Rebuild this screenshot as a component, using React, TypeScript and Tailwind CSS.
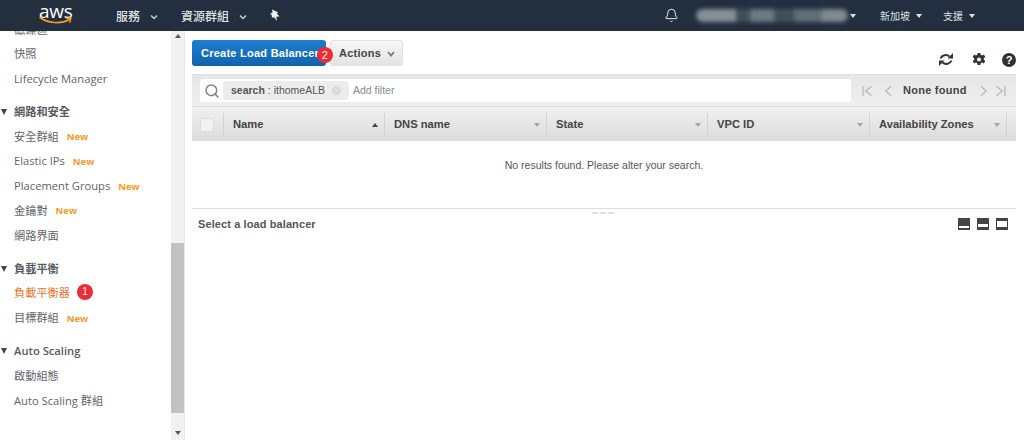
import React from "react";
import { Bell, Search, X } from "lucide-react";

const sans = "font-['Open_Sans','Noto_Sans_CJK_TC',sans-serif]";
const arial = "font-['Liberation_Sans','Noto_Sans_CJK_TC',sans-serif]";

function Caret({ className = "" }: { className?: string }) {
  return <span className={`inline-block w-0 h-0 border-l-[3.5px] border-r-[3.5px] border-t-[4px] border-l-transparent border-r-transparent ${className}`} />;
}

function CaretUp({ className = "" }: { className?: string }) {
  return <span className={`inline-block w-0 h-0 border-l-[3.5px] border-r-[3.5px] border-b-[4px] border-l-transparent border-r-transparent ${className}`} />;
}

function Item({ label, isNew, active, badge }: { label: string; isNew?: boolean; active?: boolean; badge?: string }) {
  return (
    <div className={`h-[24.8px] flex items-center pl-[14px] text-[11.2px] ${active ? "text-[#e8732a]" : "text-[#5f6368]"}`}>
      <span>{label}</span>
      {isNew && <span className="ml-[8px] text-[9.5px] font-bold text-[#f79a1e]">New</span>}
      {badge && (
        <span className={`ml-[7px] -mt-[4px] w-4 h-4 rounded-full bg-[#ef2b33] text-white text-[10px] flex items-center justify-center ${arial}`}>{badge}</span>
      )}
    </div>
  );
}

function Section({ label }: { label: string }) {
  return (
    <div className="h-[24.8px] flex items-center text-[11.2px] font-semibold text-[#555b61] mt-[8px]">
      <span className="w-0 h-0 ml-[1px] mr-[7px] border-l-[3.5px] border-r-[3.5px] border-t-[6px] border-l-transparent border-r-transparent border-t-[#444]" />
      <span>{label}</span>
    </div>
  );
}

function Col({ label, w, sort }: { label: string; w: string; sort?: boolean }) {
  return (
    <div className={`${w} h-[24px] shrink-0 flex items-center justify-between pl-[9px] pr-[6px] border-r border-[#d2d2d2]`}>
      <span className="text-[11.2px] font-bold text-[#444]">{label}</span>
      {sort ? <CaretUp className="border-b-[#444]" /> : <Caret className="border-t-[#a5a5a5]" />}
    </div>
  );
}

function PaneIcon({ kind }: { kind: "bottom" | "mid" | "top" }) {
  const pane = kind === "top" ? "top-[3px] h-[6px]" : kind === "mid" ? "top-[6px] h-[3px]" : "top-[8px] h-[2px]";
  return (
    <span className="relative block w-[12px] h-[12px] bg-[#444]">
      <span className={`absolute left-[1px] right-[1px] bg-white ${pane}`} />
    </span>
  );
}

export default function App() {
  return (
    <div className={`w-[1024px] h-[440px] overflow-hidden bg-white flex flex-col ${arial}`}>
      {/* Top nav */}
      <header className="h-[31px] shrink-0 bg-[#232f3e] flex items-center text-[#dfe3e6]">
        <div className={`relative ml-[39px] w-[36px] h-[31px] ${sans}`}>
          <span className="absolute left-0 top-0 text-[19px] leading-[22px] text-white tracking-[-0.3px]">aws</span>
          <svg className="absolute left-0 top-[16px]" width="34" height="10" viewBox="0 0 34 10" fill="none">
            <path d="M1 1.5C8 7 22 8.5 30 3.8" stroke="#f79a1e" strokeWidth="1.6" strokeLinecap="round" />
            <path d="M27.5 2.2L32 2L30.8 6.2" stroke="#f79a1e" strokeWidth="1.4" strokeLinecap="round" strokeLinejoin="round" />
          </svg>
        </div>
        <span className="ml-[41px] text-[12px] font-medium font-['Noto_Sans_CJK_TC',sans-serif]">服務</span>
        <svg className="ml-[10px] mt-[2px]" width="8" height="6" viewBox="0 0 8 6" fill="none"><path d="M1 1.5L4 4.5L7 1.5" stroke="#c8ccd0" strokeWidth="1.5" /></svg>
        <span className="ml-[23px] text-[12px] font-medium font-['Noto_Sans_CJK_TC',sans-serif]">資源群組</span>
        <svg className="ml-[10px] mt-[2px]" width="8" height="6" viewBox="0 0 8 6" fill="none"><path d="M1 1.5L4 4.5L7 1.5" stroke="#c8ccd0" strokeWidth="1.5" /></svg>
        <svg className="ml-[22px]" width="12" height="13" viewBox="0 0 12 13" fill="#eef0f2">
          <path d="M3 .5L9 3.200 7.800 4.600 10.500 7.500 7.300 7.800 8 12 5 8.200 3 8.800 2.500 5.500 .8 5 3.500 3.500z" />
        </svg>
        <Bell className="ml-[383px]" size={15} strokeWidth={1.5} color="#f2f3f4" />
        <div className="ml-[17px] w-[152px] h-[13px] flex overflow-hidden rounded-full blur-[2px] opacity-90">
          <span className="w-[40px] bg-[#8f9aa4]" />
          <span className="w-[14px] bg-[#46525f]" />
          <span className="w-[24px] bg-[#76828d]" />
          <span className="w-[20px] bg-[#46525f]" />
          <span className="w-[28px] bg-[#68747f]" />
          <span className="w-[26px] bg-[#8a949d]" />
        </div>
        <Caret className="ml-[2px] border-t-[#dfe3e6]" />
        <span className="ml-[24px] text-[10px] font-['Noto_Sans_CJK_TC',sans-serif]">新加坡</span>
        <Caret className="ml-[6px] border-t-[#dfe3e6]" />
        <span className="ml-[21px] text-[10px] font-['Noto_Sans_CJK_TC',sans-serif]">支援</span>
        <Caret className="ml-[6px] border-t-[#dfe3e6]" />
      </header>

      <div className="flex-1 min-h-0 flex">
        {/* Sidebar */}
        <aside className={`w-[171px] shrink-0 overflow-hidden ${sans}`}>
          <div className="-mt-[13.5px]">
            <Item label="磁碟區" />
            <Item label="快照" />
            <Item label="Lifecycle Manager" />
            <Section label="網路和安全" />
            <Item label="安全群組" isNew />
            <Item label="Elastic IPs" isNew />
            <Item label="Placement Groups" isNew />
            <Item label="金鑰對" isNew />
            <Item label="網路界面" />
            <Section label="負載平衡" />
            <Item label="負載平衡器" active badge="1" />
            <Item label="目標群組" isNew />
            <Section label="Auto Scaling" />
            <Item label="啟動組態" />
            <Item label="Auto Scaling 群組" />
          </div>
        </aside>

        {/* Scrollbar */}
        <div className="w-[14px] shrink-0 bg-[#f1f1f1] border-r border-[#e6e6e6] flex flex-col items-center">
          <CaretUp className="mt-[3px] border-b-[#555]" />
          <div className="mt-[205px] w-full h-[170px] bg-[#c1c1c1]" />
          <Caret className="mt-[18px] border-t-[#555]" />
        </div>

        {/* Main */}
        <main className="flex-1 min-w-0 flex flex-col">
          <div className="pl-[7px] pr-[8px] pt-[9px]">
            <div className="flex items-start h-[26px]">
              <div className="relative w-[134px] h-[26px] pt-[1px] rounded-[3px] bg-gradient-to-b from-[#1d7fd0] to-[#1262ad] flex items-center pl-[9px] text-[11px] font-bold text-white tracking-[0.25px] whitespace-nowrap">
                Create Load Balancer
                <span className="absolute -right-[7px] top-[7px] w-4 h-4 rounded-full bg-[#ef2b33] text-white text-[11px] font-normal flex items-center justify-center">2</span>
              </div>
              <div className="ml-[4px] w-[73px] h-[26px] pt-[1px] rounded-[3px] bg-gradient-to-b from-[#f6f6f6] to-[#e4e4e4] border border-[#e0e0e0] flex items-center pl-[8px] text-[11px] font-bold text-[#444] tracking-[0.25px]">
                Actions
                <svg className="ml-[6px]" width="8" height="6" viewBox="0 0 8 6" fill="none"><path d="M1 1L4 4.500L7 1" stroke="#777" strokeWidth="1.800" /></svg>
              </div>
              {/* Top right icons */}
              <div className="ml-auto mt-[12px] flex items-center">
                <svg width="16" height="15" viewBox="0 0 16 15" fill="none" stroke="#333" strokeWidth="2">
                  <path d="M2.500 6.500A5.500 5 0 0 1 11.500 4.500" />
                  <path d="M13.500 8.500A5.500 5 0 0 1 4.500 10.500" />
                  <path d="M9.500 6.500H15V1z" fill="#333" stroke="none" />
                  <path d="M6.500 8.500H1V14z" fill="#333" stroke="none" />
                </svg>
                <svg className="ml-[18px]" width="14" height="14" viewBox="0 0 14 14" fill="#333">
                  <path fillRule="evenodd" d="M5.600 0h2.800l.4 2 1.300.6L11.900 1.500l1.400 2.400-1.500 1.400v1.400l1.500 1.400-1.400 2.400-1.800-1.100-1.300.6-.4 2H5.600l-.4-2-1.300-.6-1.800 1.100L.7 8.200l1.500-1.400V5.400L.7 3.900l1.400-2.400 1.800 1.100 1.300-.6zM7 4.500a2 2 0 1 0 0 4 2 2 0 0 0 0-4z" />
                </svg>
                <span className="ml-[16px] w-[14px] h-[14px] rounded-full bg-[#333] text-white text-[11px] font-bold leading-[14px] text-center">?</span>
              </div>
            </div>

            {/* Filter bar */}
            <div className="mt-[8px] h-[32px] bg-gradient-to-b from-[#e6e6e6] to-[#efefef] border-t border-[#e0e0e0] flex items-center pl-[8px]">
              <div className="w-[651px] h-[23px] bg-white rounded-[3px] flex items-center pl-[4px]">
                <Search size={16} strokeWidth={2.2} color="#808080" />
                <div className="ml-[3px] w-[126px] h-[19px] rounded-[4px] bg-[#ececec] flex items-center pl-[8px] text-[10.500px] text-[#555]">
                  <span className="font-bold">search</span>
                  <span className="ml-[3px]">: ithomeALB</span>
                  <span className="ml-auto mr-[8px] w-[9px] h-[9px] rounded-full bg-[#d8d8d8] flex items-center justify-center">
                    <X size={7} strokeWidth={2} color="#f5f5f5" />
                  </span>
                </div>
                <span className="ml-[4px] text-[10.500px] text-[#8a8a8a]">Add filter</span>
              </div>
              <div className="flex-1 flex items-center pl-[11px] whitespace-nowrap">
                <svg width="11" height="12" viewBox="0 0 11 12" fill="none" stroke="#b5b5b5" strokeWidth="1.200"><path d="M1 1V11M9.500 1.500L3.500 6L9.500 10.500" /></svg>
                <svg className="ml-[11px]" width="8" height="12" viewBox="0 0 8 12" fill="none" stroke="#b5b5b5" strokeWidth="1.200"><path d="M7 1.500L1.500 6L7 10.500" /></svg>
                <span className="ml-[11px] text-[11px] font-bold text-[#444] tracking-[0.25px]">None found</span>
                <svg className="ml-[13px]" width="8" height="12" viewBox="0 0 8 12" fill="none" stroke="#b5b5b5" strokeWidth="1.200"><path d="M1 1.500L6.500 6L1 10.500" /></svg>
                <svg className="ml-[7px]" width="11" height="12" viewBox="0 0 11 12" fill="none" stroke="#b5b5b5" strokeWidth="1.200"><path d="M10 1V11M1.500 1.500L7.500 6L1.500 10.500" /></svg>
              </div>
            </div>

            {/* Table header */}
            <div className="h-[35px] pt-[1px] bg-gradient-to-b from-[#f0f0f0] to-[#dcdcdc] border-t border-[#d8d8d8] flex items-center">
              <div className="w-[32px] h-[24px] shrink-0 flex items-center border-r border-[#d2d2d2] pl-[8px]">
                <span className="w-[14px] h-[14px] rounded-[3px] bg-[#f2f2f2] border border-[#dcdcdc]" />
              </div>
              <Col label="Name" w="w-[161px]" sort />
              <Col label="DNS name" w="w-[162px]" />
              <Col label="State" w="w-[161px]" />
              <Col label="VPC ID" w="w-[162px]" />
              <Col label="Availability Zones" w="w-[137px]" />
            </div>

            {/* Empty state */}
            <div className="h-[67px] pt-[17px] text-center text-[10.500px] text-[#555]">No results found. Please alter your search.</div>
          </div>

          {/* Details pane */}
          <div className="ml-[7px] mr-[8px] border-t border-[#dedede] relative flex-1">
            <div className="absolute left-[400px] top-[3px] flex gap-[2px]">
              <span className="w-[6px] h-[2px] bg-[#dddddd]" />
              <span className="w-[6px] h-[2px] bg-[#dddddd]" />
              <span className="w-[6px] h-[2px] bg-[#dddddd]" />
            </div>
            <div className="flex items-center pl-[6px] pr-[8px] pt-[7px]">
              <span className="text-[11px] font-bold text-[#555] tracking-[0.1px]">Select a load balancer</span>
              <div className="ml-auto flex gap-[7px]">
                <PaneIcon kind="bottom" />
                <PaneIcon kind="mid" />
                <PaneIcon kind="top" />
              </div>
            </div>
          </div>
        </main>
      </div>
    </div>
  );
}
